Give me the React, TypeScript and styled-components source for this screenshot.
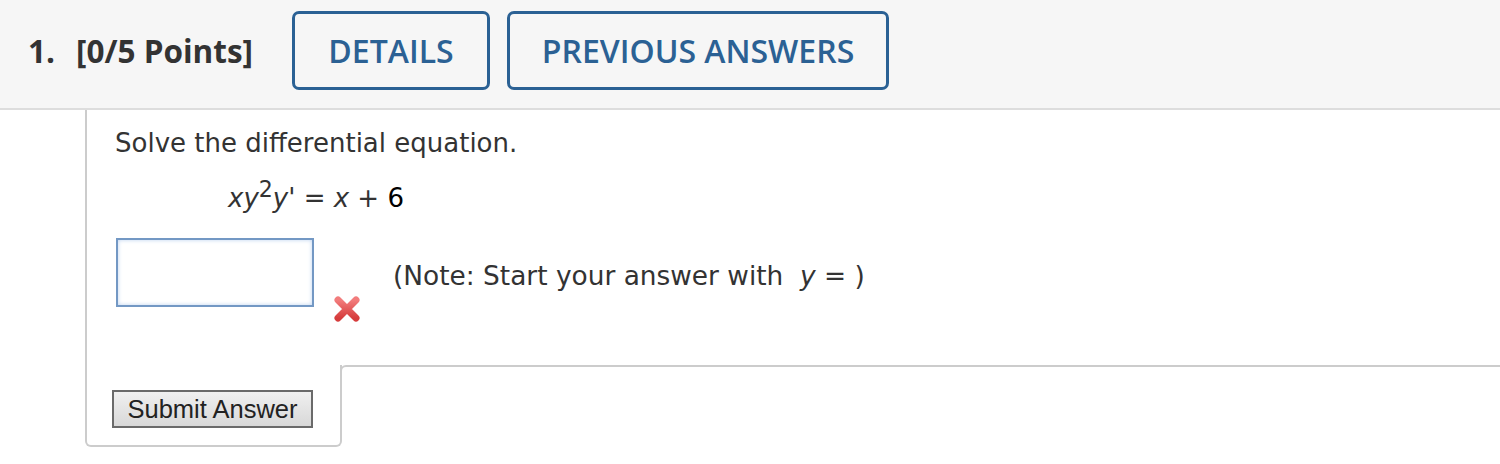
import { FC } from 'react';

import styled, { createGlobalStyle } from 'styled-components';

const GlobalStyle = createGlobalStyle`
  body {
    margin: 0;
    background: #fff;
    font-family: 'DejaVu Sans', Verdana, sans-serif;
  }
`;

const Header = styled.div`
  display: flex;
  align-items: center;
  gap: 17px;
  box-sizing: border-box;
  height: 110px;
  padding: 0 0 7px 28px;
  background: #f6f6f6;
  border-bottom: 2px solid #dddddd;
`;

const Label = styled.h2`
  margin: 0 22px 0 0;
  font-family: 'Open Sans', sans-serif;
  font-weight: 700;
  font-size: 31.5px;
  color: #333;
`;

const Num = styled.span`
  margin-right: 21px;
`;

const TabButton = styled.button<{ $width: number }>`
  width: ${(p) => p.$width}px;
  height: 79px;
  border: 3px solid #2b6194;
  border-radius: 7px;
  background: transparent;
  color: #2b6194;
  font-family: 'Open Sans', sans-serif;
  font-weight: 600;
  font-size: 32px;
`;

const Body = styled.div`
  margin-left: 85px;
`;

const Question = styled.div`
  box-sizing: border-box;
  height: 255px;
  border-left: 2px solid #cccccc;
  padding: 18px 0 0 28px;
  color: #333;
  font-size: 26px;
  line-height: 30px;
`;

const Prompt = styled.p`
  margin: 0;
`;

const Equation = styled.div`
  margin: 25px 0 0 113px;
`;

const Var = styled.i``;

const Sup = styled.sup`
  line-height: 0;
  font-size: 0.85em;
`;

const Black = styled.span`
  color: #000;
`;

const AnswerRow = styled.div`
  display: flex;
  align-items: flex-start;
  margin-top: 25px;
  margin-left: 1px;
`;

const AnswerBox = styled.input`
  box-sizing: border-box;
  width: 198px;
  height: 69px;
  border: 2px solid #7398c4;
  box-shadow: inset 0 0 4px #bcd2f0;
  outline: none;
`;

const Mark = styled.svg`
  margin: 57px 0 0 19px;
`;

const Note = styled.span`
  margin: 23px 0 0 32px;
  font-size: 26.4px;
`;

const Footer = styled.div`
  display: flex;
`;

const SubmitTab = styled.div`
  box-sizing: border-box;
  width: 257px;
  height: 82px;
  padding: 25px 0 0 25px;
  border: 2px solid #cccccc;
  border-top: none;
  border-radius: 0 0 6px 6px;
`;

const Filler = styled.div`
  flex: 1;
  height: 60px;
  margin-left: -2px;
  border-top: 2px solid #cccccc;
  border-left: 2px solid #cccccc;
  border-top-left-radius: 6px;
`;

const SubmitButton = styled.button`
  width: 201px;
  height: 38px;
  padding: 0;
  border: 2px solid #6a6a6a;
  background: linear-gradient(#f0f0f0, #d8d8d8);
  color: #222;
  font-family: 'Liberation Sans', Arial, sans-serif;
  font-size: 25.5px;
`;

const WrongMark: FC = () => (
  <Mark width="28" height="28" viewBox="0 0 28 28">
    <defs>
      <linearGradient id="xg" x1="0" y1="0" x2="0" y2="1">
        <stop offset="0" stopColor="#f27c7c" />
        <stop offset="1" stopColor="#d63c3c" />
      </linearGradient>
    </defs>
    <path d="M5 5 L23 23 M23 5 L5 23" stroke="url(#xg)" strokeWidth="7" strokeLinecap="round" />
  </Mark>
);

const App: FC = () => (
  <>
    <GlobalStyle />
    <Header>
      <Label>
        <Num>1.</Num>[0/5 Points]
      </Label>
      <TabButton $width={198}>DETAILS</TabButton>
      <TabButton $width={382}>PREVIOUS ANSWERS</TabButton>
    </Header>
    <Body>
      <Question>
        <Prompt>Solve the differential equation.</Prompt>
        <Equation>
          <Var>xy</Var>
          <Sup>2</Sup>
          <Var>y'</Var> = <Var>x</Var> + <Black>6</Black>
        </Equation>
        <AnswerRow>
          <AnswerBox type="text" />
          <WrongMark />
          <Note>
            (Note: Start your answer with&nbsp; <Var>y</Var> = )
          </Note>
        </AnswerRow>
      </Question>
      <Footer>
        <SubmitTab>
          <SubmitButton>Submit Answer</SubmitButton>
        </SubmitTab>
        <Filler />
      </Footer>
    </Body>
  </>
);

export default App;
